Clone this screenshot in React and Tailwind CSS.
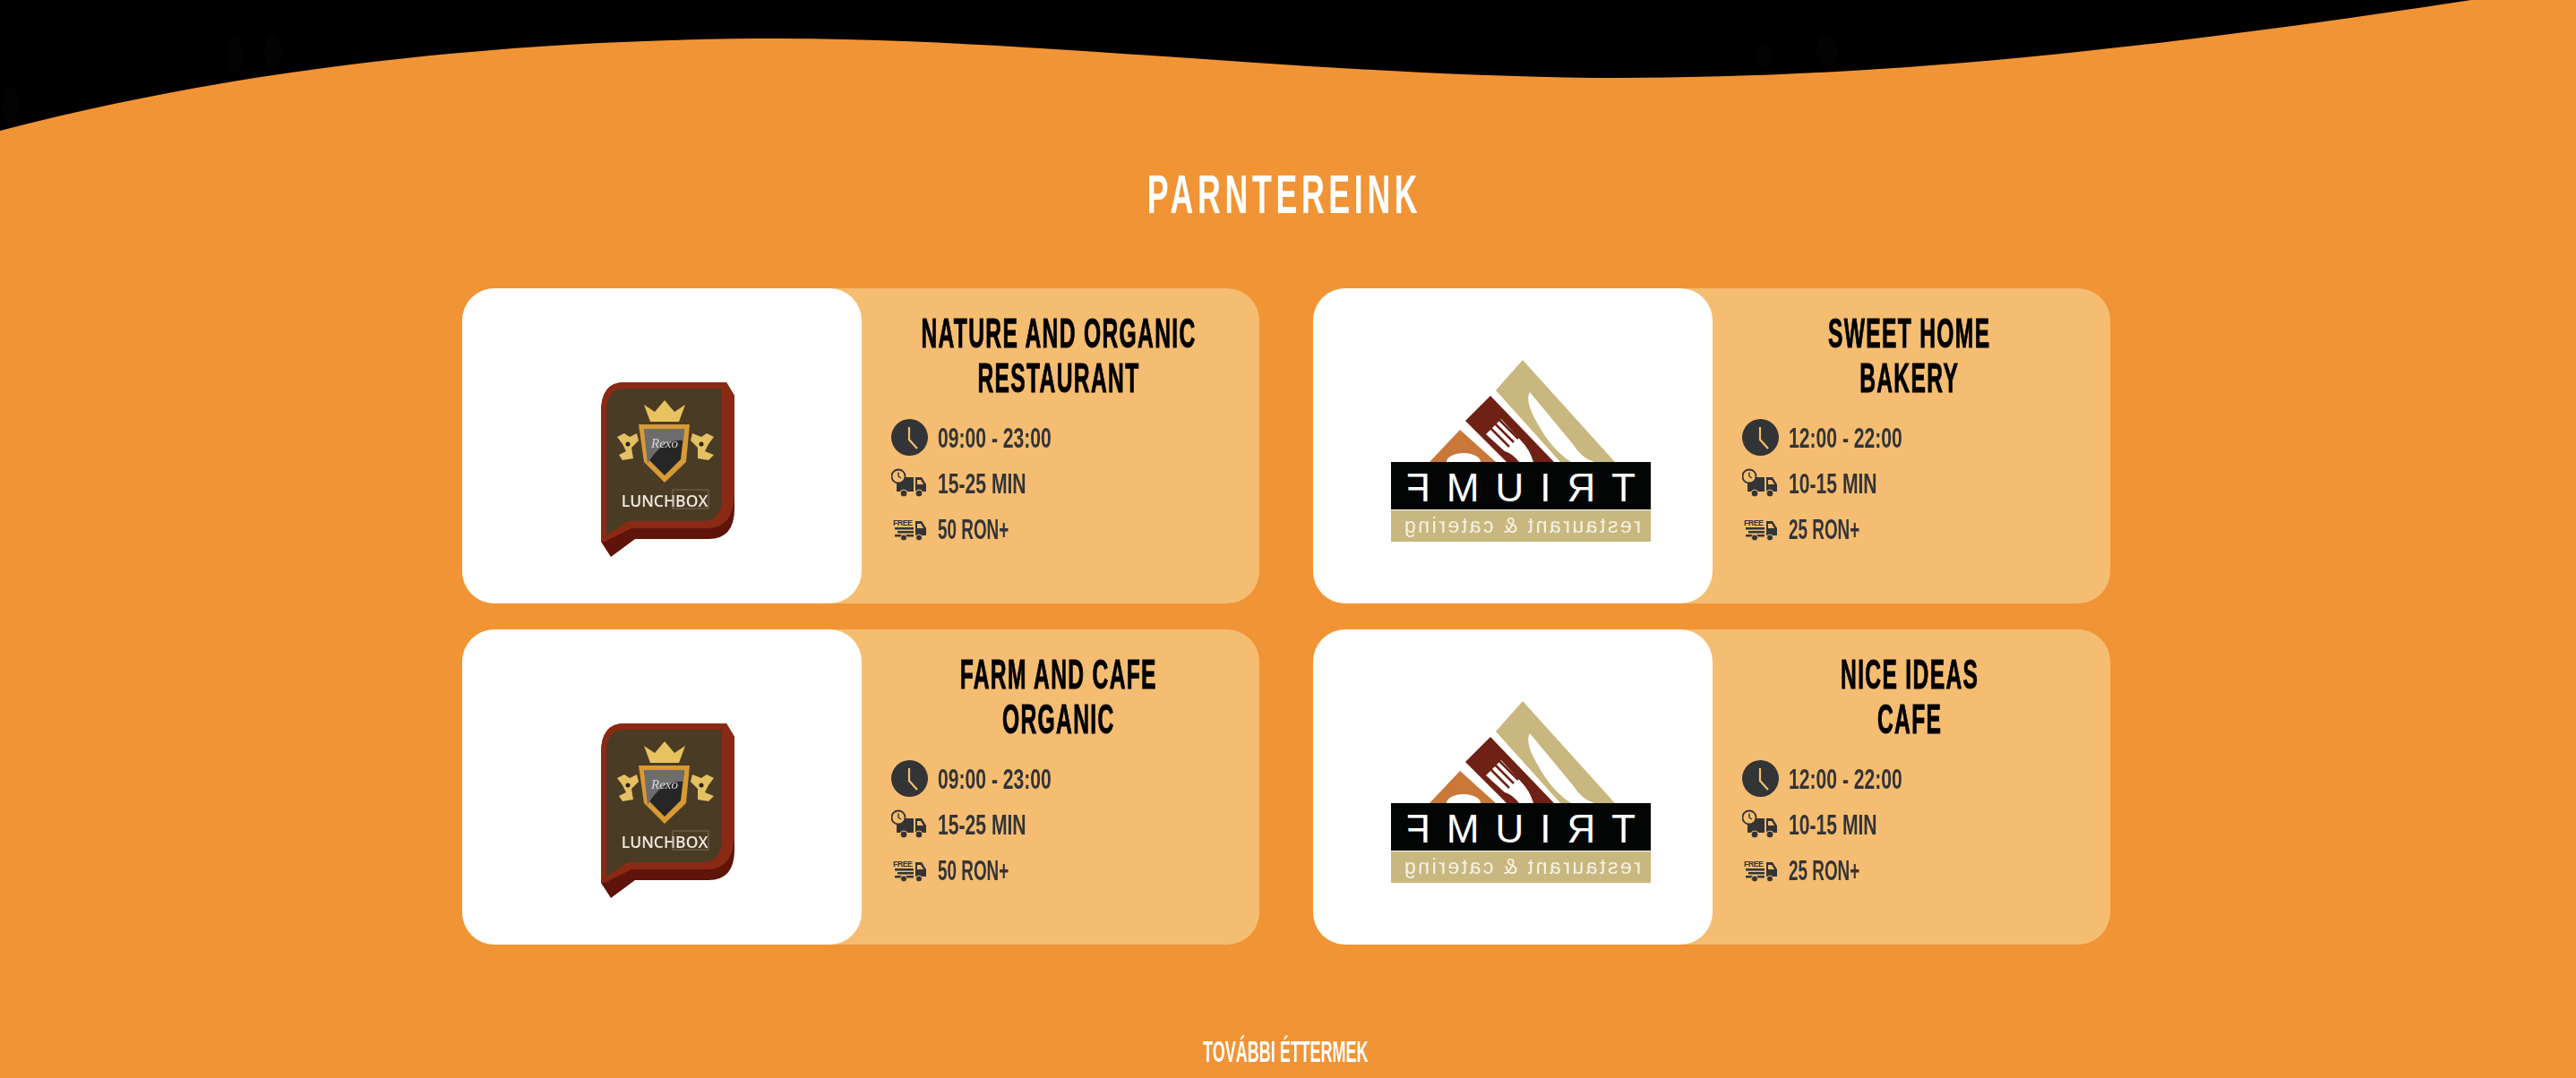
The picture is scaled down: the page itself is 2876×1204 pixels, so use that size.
import React from 'react';

const partners = [
  { lines: ['NATURE AND ORGANIC', 'RESTAURANT'], hours: '09:00 - 23:00', time: '15-25 MIN', min: '50 RON+', logo: 'rexo' },
  { lines: ['SWEET HOME', 'BAKERY'], hours: '12:00 - 22:00', time: '10-15 MIN', min: '25 RON+', logo: 'triumf' },
  { lines: ['FARM AND CAFE', 'ORGANIC'], hours: '09:00 - 23:00', time: '15-25 MIN', min: '50 RON+', logo: 'rexo' },
  { lines: ['NICE IDEAS', 'CAFE'], hours: '12:00 - 22:00', time: '10-15 MIN', min: '25 RON+', logo: 'triumf' },
];

const Wave = () => (
  <svg className="block w-full h-[150px]" viewBox="0 0 2876 150" preserveAspectRatio="none">
    <path d="M0 0 H2759 C2400 55 2100 87 1806 87 C1500 87 1150 43 872 43 C600 43 290 70 0 146 Z" fill="#000" />
    <g fill="#030303">
      <ellipse cx="12" cy="118" rx="9" ry="20" />
      <ellipse cx="262" cy="62" rx="9" ry="20" />
      <ellipse cx="305" cy="58" rx="10" ry="20" />
      <ellipse cx="1970" cy="62" rx="10" ry="14" />
      <ellipse cx="2040" cy="56" rx="12" ry="18" />
    </g>
  </svg>
);

const RexoLogo = () => (
  <svg className="mt-[44px] blur-[0.6px]" width="200" height="240" viewBox="0 0 200 240">
    <path d="M32 60 Q32 27 58 27 H172 L181 42 V168 Q181 202 152 202 H70 L43 222 L32 205 Z" fill="#5e1408" />
    <path d="M32 60 Q32 27 58 27 H172 L181 42 V150 Q181 190 150 190 H66 L36 205 L32 205 Z" fill="#8a2a15" />
    <path d="M38 60 Q38 34 58 34 H167 V155 Q167 182 146 182 H62 L38 198 Z" fill="#4a3b25" />
    <path d="M87 71 L80 52 L92 60 L103 47 L114 60 L126 52 L119 71 Z" fill="#e8c25e" />
    <path d="M74 74 H131 L127 116 L103 139 L80 116 Z" fill="#d89a35" />
    <path d="M80 79 H125 L121 113 L103 131 L85 113 Z" fill="#262626" />
    <path d="M80 79 H125 L124 92 Q100 90 84 118 L82 100 Z" fill="#6d6d6d" />
    <text x="103" y="100" textAnchor="middle" fontFamily="Liberation Serif, serif" fontStyle="italic" fontSize="15" fill="#d8d8d8">Rexo</text>
    <path d="M50 88 L58 84 L64 88 L72 84 L74 92 L66 100 L68 112 L56 114 L52 108 L60 104 L56 96 Z" fill="#e3c063" />
    <path d="M158 88 L150 84 L144 88 L134 84 L132 92 L140 100 L140 112 L152 114 L158 108 L148 104 L152 96 Z" fill="#e3c063" />
    <circle cx="62" cy="96" r="2.5" fill="#2b2318" />
    <circle cx="144" cy="96" r="2.5" fill="#2b2318" />
    <text x="103" y="166" textAnchor="middle" fontFamily="Open Sans, sans-serif" fontWeight="600" fontSize="17.5" fill="#efe9dc">LUNCHBOX</text>
    <rect x="112" y="147" width="40" height="21" fill="none" stroke="#8b8373" strokeWidth="0.7" />
  </svg>
);

const TriumfLogo = () => (
  <svg className="ml-[22px] mt-[4px] blur-[0.4px]" width="340" height="240" viewBox="0 0 340 240">
    <path d="M170 22 L273 136 H212 L140 56 Z" fill="#c8b77f" />
    <path d="M178 58 Q172 68 186 92 Q202 122 224 136 H250 Q236 132 226 116 Z" fill="#fff" />
    <path d="M134 62 L205 136 H152 L106 90 Z" fill="#6f2116" />
    <path d="M129 105 L146 88 L168 112 Q178 122 182 136 H166 Q158 126 150 124 Z" fill="#fff" />
    <path d="M138 92 L160 114 M133 97 L155 119 M143 88 L165 110" stroke="#6f2116" strokeWidth="2.5" />
    <path d="M100 100 L140 136 H66 Z" fill="#c9783a" />
    <ellipse cx="104" cy="136" rx="19" ry="10" fill="#fff" />
    <rect x="23" y="136" width="290" height="53" fill="#030505" />
    <rect x="23" y="190" width="290" height="35" fill="#c8b77f" />
    <text transform="translate(296 180) scale(-1 1)" textLength="256" fontFamily="Liberation Sans, sans-serif" fontSize="44" fill="#fff">TRIUMF</text>
    <text transform="translate(302 215) scale(-1 1)" textLength="264" fontFamily="Liberation Sans, sans-serif" fontSize="23" fill="#f7f3e4">restaurant &amp; catering</text>
  </svg>
);

const ClockIcon = () => (
  <svg width="41" height="41" viewBox="0 0 41 41">
    <circle cx="20.5" cy="20.5" r="20.5" fill="#333436" />
    <path d="M20 9 L20 23 L29 33" fill="none" stroke="#f5bd72" strokeWidth="2.2" />
  </svg>
);

const TruckIcon = () => (
  <svg width="41" height="33" viewBox="0 0 41 33">
    <path d="M6 10 H25 V26 H6 Z" fill="#333436" />
    <path d="M27 10 H34 L39 18 V26 H27 Z" fill="#333436" />
    <path d="M29 13 H33 L36 18 H29 Z" fill="#f5bd72" />
    <circle cx="14" cy="28" r="4" fill="#333436" stroke="#f5bd72" />
    <circle cx="31" cy="28" r="4" fill="#333436" stroke="#f5bd72" />
    <circle cx="8" cy="9" r="7.5" fill="#f5bd72" stroke="#333436" strokeWidth="1.8" />
    <path d="M8 4.5 V9 L11 11" fill="none" stroke="#333436" strokeWidth="1.4" />
  </svg>
);

const FreeTruckIcon = () => (
  <svg width="41" height="27" viewBox="0 0 41 27">
    <text x="2" y="10" fontFamily="Liberation Sans, sans-serif" fontWeight="700" fontSize="9" textLength="22" fill="#333436">FREE</text>
    <rect x="4" y="12" width="21" height="2.5" fill="#333436" />
    <rect x="7" y="16" width="18" height="2.5" fill="#333436" />
    <rect x="4" y="20" width="21" height="2.5" fill="#333436" />
    <path d="M27 5 H34 L39 13 V21 H27 Z" fill="#333436" />
    <path d="M29 8 H33 L36 13 H29 Z" fill="#f5bd72" />
    <circle cx="14" cy="23.5" r="3.5" fill="#333436" stroke="#f5bd72" />
    <circle cx="31" cy="23.5" r="3.5" fill="#333436" stroke="#f5bd72" />
  </svg>
);

const InfoRow = ({ icon, children, className = 'scale-x-[0.66]' }) => (
  <div className="flex items-center h-[51px]">
    <div className="w-[41px] flex justify-center">{icon}</div>
    <span className={`ml-[11px] inline-block origin-left whitespace-nowrap text-[32px] font-bold text-[#333436] ${className}`}>
      {children}
    </span>
  </div>
);

const PartnerCard = ({ partner }) => (
  <div className="flex h-[352px] rounded-[36px] bg-[#f5bd72]">
    <div className="flex w-[446px] shrink-0 items-center justify-center rounded-[36px] bg-white">
      {partner.logo === 'rexo' ? <RexoLogo /> : <TriumfLogo />}
    </div>
    <div className="w-[444px] pt-[25px]">
      <div className="flex justify-center pr-[4px]">
        <h3 className="shrink-0 origin-center scale-x-[0.535] whitespace-nowrap text-center text-[46px] leading-[50px] font-bold tracking-[2.5px] text-black [-webkit-text-stroke:1px_black]">
          {partner.lines[0]}
          <br />
          {partner.lines[1]}
        </h3>
      </div>
      <div className="mt-[16px] pl-[33px]">
        <InfoRow icon={<ClockIcon />}>{partner.hours}</InfoRow>
        <InfoRow icon={<TruckIcon />}>{partner.time}</InfoRow>
        <InfoRow icon={<FreeTruckIcon />} className="scale-x-[0.59]">{partner.min}</InfoRow>
      </div>
    </div>
  </div>
);

export default function App() {
  return (
    <div className="h-[1204px] overflow-hidden bg-[#f19435] font-['Liberation_Sans',sans-serif]">
      <Wave />
      <div className="mt-[34px] flex h-[68px] items-center justify-center pr-[8px]">
        <h2 className="shrink-0 origin-center scale-x-[0.585] whitespace-nowrap text-[61px] font-bold tracking-[8px] text-white">
          PARNTEREINK
        </h2>
      </div>
      <div className="mt-[70px] flex justify-center pr-[4px]">
        <div className="grid grid-cols-[890px_890px] gap-x-[60px] gap-y-[29px]">
          {partners.map((partner) => (
            <PartnerCard key={partner.lines[0]} partner={partner} />
          ))}
        </div>
      </div>
      <div className="mt-[96px] flex justify-center pr-[6px]">
        <span className="shrink-0 origin-center scale-x-[0.545] whitespace-nowrap text-[33px] leading-[48px] font-bold text-white">
          TOVÁBBI ÉTTERMEK
        </span>
      </div>
    </div>
  );
}
